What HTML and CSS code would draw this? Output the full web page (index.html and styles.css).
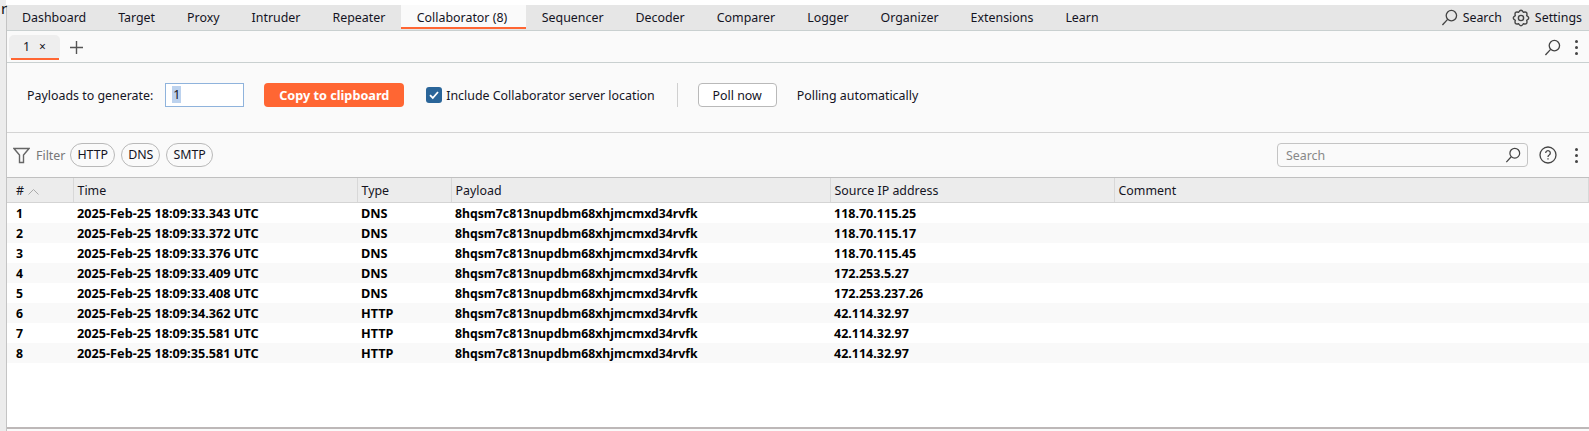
FILE: index.html
```html
<!DOCTYPE html>
<html lang="en">
<head>
    <meta charset="UTF-8">
    <meta name="viewport" content="width=device-width, initial-scale=1.0">
    <title>Collaborator</title>
    <link rel="stylesheet" href="styles.css">
</head>
<body>

    <div class="stray">r</div>
    <div class="top-gap"></div>

    <div id="app">
        <nav class="main-tabs">
            <div class="tab-list">
                <span class="main-tab">Dashboard</span>
                <span class="main-tab">Target</span>
                <span class="main-tab">Proxy</span>
                <span class="main-tab">Intruder</span>
                <span class="main-tab">Repeater</span>
                <span class="main-tab active">Collaborator (8)</span>
                <span class="main-tab">Sequencer</span>
                <span class="main-tab">Decoder</span>
                <span class="main-tab">Comparer</span>
                <span class="main-tab">Logger</span>
                <span class="main-tab">Organizer</span>
                <span class="main-tab">Extensions</span>
                <span class="main-tab">Learn</span>
            </div>
            <div class="top-actions">
                <span class="top-action">
                    <svg class="icon" width="17" height="17" viewBox="0 0 18 18"><circle cx="11" cy="7" r="5.5"/><path d="M7 11 1.500 17"/></svg>
                    Search
                </span>
                <span class="top-action">
                    <svg class="icon" width="18" height="18" viewBox="0 0 18 18"><circle cx="9" cy="9" r="2.6"/><path d="M14.73 6.63Q18.8 9 14.73 11.37 15.93 15.93 11.37 14.73 9 18.8 6.63 14.73 2.07 15.93 3.27 11.37-.8 9 3.27 6.63 2.07 2.07 6.63 3.27 9-.8 11.37 3.27 15.93 2.07 14.73 6.63z"/></svg>
                    Settings
                </span>
            </div>
        </nav>

        <div class="sub-tabs">
            <span class="sub-tab">1<span class="close">×</span></span>
            <svg class="plus" width="13" height="13" viewBox="0 0 13 13"><path d="M6.500 0v13M0 6.500h13"/></svg>
            <div class="sub-actions">
                <svg class="icon" width="17" height="17" viewBox="0 0 18 18"><circle cx="11" cy="7" r="5.5"/><path d="M7 11 1.500 17"/></svg>
                <span class="dots"><i></i><i></i><i></i></span>
            </div>
        </div>

        <section class="controls">
            <label class="payload-label">Payloads to generate:</label>
            <span class="count-input"><span class="selected">1</span></span>
            <button class="copy-btn">Copy to clipboard</button>
            <span class="checkbox">
                <svg width="16" height="16" viewBox="0 0 16 16"><path d="M4 8.200 6.800 11 12 5"/></svg>
            </span>
            <span class="check-label">Include Collaborator server location</span>
            <span class="divider"></span>
            <button class="poll-btn">Poll now</button>
            <span class="poll-status">Polling automatically</span>
        </section>

        <section class="filter-bar">
            <svg class="funnel" width="17" height="17" viewBox="0 0 17 17"><path d="M1 1.500h15L10.500 8v7.500h-4V8z"/></svg>
            <span class="filter-label">Filter</span>
            <span class="pill">HTTP</span>
            <span class="pill">DNS</span>
            <span class="pill">SMTP</span>
            <div class="filter-right">
                <div class="search-box">
                    <span>Search</span>
                    <svg class="icon" width="16" height="16" viewBox="0 0 18 18"><circle cx="11" cy="7" r="5.5"/><path d="M7 11 1.500 17"/></svg>
                </div>
                <svg class="help" width="18" height="18" viewBox="0 0 18 18"><circle cx="9" cy="9" r="8"/><path d="M6.700 7a2.300 2.300 0 1 1 3.500 2c-.9.500-1.200 1-1.200 2"/><path d="M9 12.200v1.400"/></svg>
                <span class="dots"><i></i><i></i><i></i></span>
            </div>
        </section>

        <table class="results">
            <colgroup>
                <col class="c-num"><col class="c-time"><col class="c-type"><col class="c-payload"><col class="c-ip"><col>
            </colgroup>
            <thead>
                <tr>
                    <th># <svg class="sort" width="11" height="6" viewBox="0 0 11 6"><path d="M.5 5.500 5.500.5l5 5"/></svg></th>
                    <th>Time</th>
                    <th>Type</th>
                    <th>Payload</th>
                    <th>Source IP address</th>
                    <th>Comment</th>
                </tr>
            </thead>
            <tbody>
                <tr><td>1</td><td>2025-Feb-25 18:09:33.343 UTC</td><td>DNS</td><td>8hqsm7c813nupdbm68xhjmcmxd34rvfk</td><td>118.70.115.25</td><td></td></tr>
                <tr><td>2</td><td>2025-Feb-25 18:09:33.372 UTC</td><td>DNS</td><td>8hqsm7c813nupdbm68xhjmcmxd34rvfk</td><td>118.70.115.17</td><td></td></tr>
                <tr><td>3</td><td>2025-Feb-25 18:09:33.376 UTC</td><td>DNS</td><td>8hqsm7c813nupdbm68xhjmcmxd34rvfk</td><td>118.70.115.45</td><td></td></tr>
                <tr><td>4</td><td>2025-Feb-25 18:09:33.409 UTC</td><td>DNS</td><td>8hqsm7c813nupdbm68xhjmcmxd34rvfk</td><td>172.253.5.27</td><td></td></tr>
                <tr><td>5</td><td>2025-Feb-25 18:09:33.408 UTC</td><td>DNS</td><td>8hqsm7c813nupdbm68xhjmcmxd34rvfk</td><td>172.253.237.26</td><td></td></tr>
                <tr><td>6</td><td>2025-Feb-25 18:09:34.362 UTC</td><td>HTTP</td><td>8hqsm7c813nupdbm68xhjmcmxd34rvfk</td><td>42.114.32.97</td><td></td></tr>
                <tr><td>7</td><td>2025-Feb-25 18:09:35.581 UTC</td><td>HTTP</td><td>8hqsm7c813nupdbm68xhjmcmxd34rvfk</td><td>42.114.32.97</td><td></td></tr>
                <tr><td>8</td><td>2025-Feb-25 18:09:35.581 UTC</td><td>HTTP</td><td>8hqsm7c813nupdbm68xhjmcmxd34rvfk</td><td>42.114.32.97</td><td></td></tr>
            </tbody>
        </table>
        <div class="table-end"></div>
    </div>

</body>
</html>
```

FILE: styles.css
```css
/* General */
html, body {
    margin: 0;
    padding: 0;
    height: 431px;
    overflow: hidden;
}

body {
    font-family: "Noto Sans", sans-serif;
    font-size: 12.4px;
    color: #14141f;
    background: #ececec;
}

/* Letter left over at the window corner */
.stray {
    position: absolute;
    left: 1px;
    top: 0;
    font-size: 15px;
    line-height: 17px;
    color: #111;
}

.top-gap {
    height: 5px;
    margin-left: 6px;
    background: #fff;
}

#app {
    margin-left: 6px;
    height: 426px;
    display: flex;
    flex-direction: column;
    border-left: 1px solid #c4c4c4;
    background: #fafafa;
}

/* Main tabs */
.main-tabs {
    height: 25px;
    flex: none;
    display: flex;
    justify-content: space-between;
    background: #e6e6e6;
    border-bottom: 1px solid #c9d0d0;
}

.tab-list {
    display: flex;
}

.main-tab {
    padding: 0 16px;
    line-height: 25px;
    white-space: nowrap;
}

.main-tab:first-child {
    padding-left: 15px;
}

.main-tab.active {
    padding: 0 18.5px 0 15.5px;
    height: 24px;
    background: #fafafa;
    box-shadow: inset 0 -2px 0 #ff6633;
}

.top-actions {
    display: flex;
    gap: 10px;
    padding-right: 7px;
}

.top-action {
    display: flex;
    align-items: center;
    gap: 5px;
}

.icon {
    fill: none;
    stroke: #444;
    stroke-width: 1.4;
}

/* Sub tabs */
.sub-tabs {
    height: 31px;
    flex: none;
    display: flex;
    align-items: flex-start;
    border-bottom: 1px solid #c9d0d0;
}

.sub-tab {
    position: relative;
    width: 37px;
    height: 25px;
    margin: 4px 0 0 2px;
    padding-left: 14px;
    line-height: 24px;
    background: #eeeeee;
    border-radius: 5px;
}

.sub-tab::after {
    content: "";
    position: absolute;
    left: 2px;
    right: 1px;
    bottom: 0;
    height: 2px;
    background: #ff6633;
}

.close {
    font-size: 12px;
    margin-left: 9px;
}

.plus {
    margin: 10px 0 0 10px;
    fill: none;
    stroke: #555;
    stroke-width: 1.4;
}

.sub-actions {
    margin: 8px 0 0 auto;
    display: flex;
    align-items: center;
    gap: 14px;
    padding-right: 11px;
}

.dots {
    display: flex;
    flex-direction: column;
    gap: 3px;
}

.dots i {
    width: 3px;
    height: 3px;
    border-radius: 50%;
    background: #444;
}

/* Payload controls */
.controls {
    height: 70px;
    flex: none;
    display: flex;
    align-items: center;
    padding: 0 0 5px 20px;
    box-sizing: border-box;
    border-bottom: 1px solid #d4d4d4;
}

.count-input {
    width: 71px;
    height: 22px;
    margin-left: 12px;
    padding-left: 6px;
    background: #fff;
    border: 1px solid #8fb3dc;
    line-height: 22px;
}

.selected {
    background: #bcd2ee;
    padding: 0 1px;
}

.copy-btn {
    width: 140px;
    height: 24px;
    margin-left: 20px;
    padding: 0;
    border: none;
    border-radius: 4px;
    background: #ff6633;
    color: #fff;
    font: bold 12.7px "Noto Sans", sans-serif;
}

.checkbox {
    width: 16px;
    height: 16px;
    margin-left: 22px;
    border-radius: 3px;
    background: #2a6599;
    display: flex;
}

.checkbox svg {
    fill: none;
    stroke: #fff;
    stroke-width: 1.8;
}

.check-label {
    margin-left: 4px;
}

.divider {
    width: 1px;
    height: 24px;
    margin: 0 20px 0 22px;
    background: #d0d0d0;
}

.poll-btn {
    width: 79px;
    height: 24px;
    padding: 0;
    background: #fff;
    border: 1px solid #b9b9b9;
    border-radius: 4px;
    color: #14141f;
    font: 12.4px "Noto Sans", sans-serif;
}

.poll-status {
    margin-left: 20px;
}

/* Filter row */
.filter-bar {
    height: 45px;
    flex: none;
    display: flex;
    align-items: center;
    padding-left: 6px;
    box-sizing: border-box;
    border-bottom: 1px solid #c0c0c0;
}

.funnel {
    fill: none;
    stroke: #666;
    stroke-width: 1.4;
}

.filter-label {
    margin: 0 5px 0 6px;
    color: #777;
}

.pill {
    height: 22px;
    line-height: 22px;
    padding: 0 6px;
    margin-right: 6px;
    border: 1px solid #b9b9b9;
    border-radius: 12px;
}

.filter-right {
    margin-left: auto;
    display: flex;
    align-items: center;
    padding-right: 11px;
}

.search-box {
    width: 235px;
    height: 22px;
    display: flex;
    align-items: center;
    justify-content: space-between;
    padding: 0 6px 0 8px;
    border: 1px solid #c4c4c4;
    border-radius: 4px;
    color: #888;
}

.help {
    margin-left: 11px;
    margin-right: 18px;
    fill: none;
    stroke: #444;
    stroke-width: 1.3;
}

/* Results table */
.results {
    width: 100%;
    border-collapse: collapse;
    table-layout: fixed;
    background: #fff;
}

.c-num { width: 66px; }
.c-time { width: 284px; }
.c-type { width: 94px; }
.c-payload { width: 379px; }
.c-ip { width: 284px; }

.results th {
    height: 24px;
    padding: 0 0 0 4px;
    font-weight: normal;
    text-align: left;
    background: #ececec;
    border-right: 1px solid #d8d8d8;
    border-bottom: 1px solid #d4d4d4;
}

.results th:first-child, .results td:first-child {
    padding-left: 9px;
}

.sort {
    fill: none;
    stroke: #aaa;
    margin-left: 1px;
}

.results td {
    height: 20px;
    padding: 0 0 0 4px;
    font-size: 12.25px;
    font-weight: bold;
    color: #000;
}

.results td:nth-child(2), .results td:nth-child(3) {
    font-size: 12.7px;
}

.results td:nth-child(5) {
    font-size: 12.5px;
}

.results tbody tr:nth-child(even) {
    background: #f9f9f9;
}

.table-end {
    flex: 1;
    background: #fff;
    border-bottom: 2px solid #bdb8b8;
    margin-bottom: 2px;
}
```
